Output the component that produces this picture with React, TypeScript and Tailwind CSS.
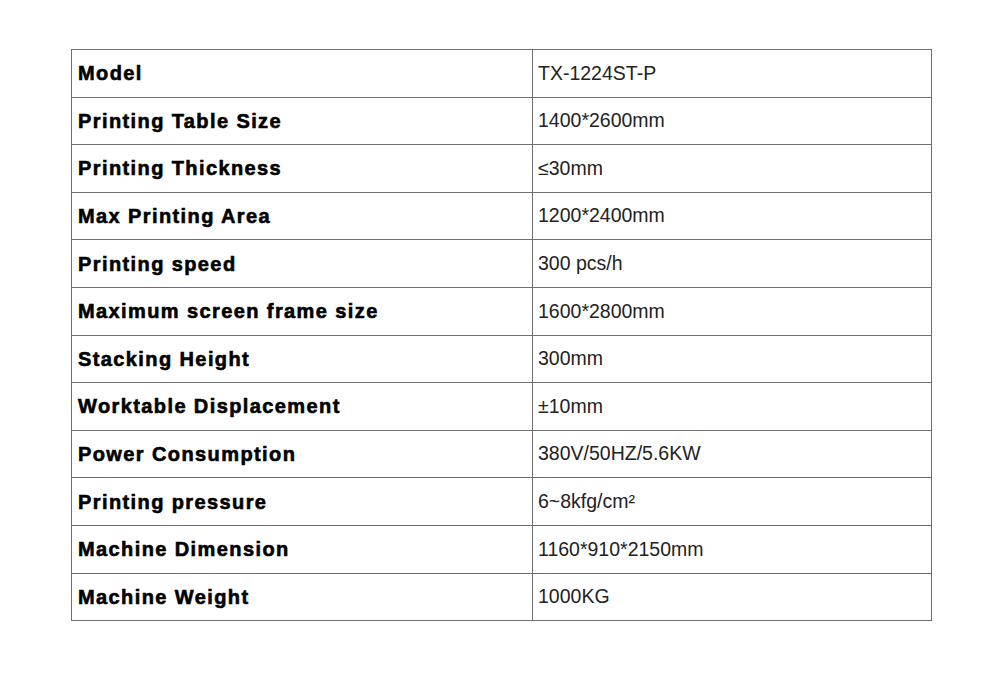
const specs: [string, string][] = [
  ['Model', 'TX-1224ST-P'],
  ['Printing Table Size', '1400*2600mm'],
  ['Printing Thickness', '≤30mm'],
  ['Max Printing Area', '1200*2400mm'],
  ['Printing speed', '300 pcs/h'],
  ['Maximum screen frame size', '1600*2800mm'],
  ['Stacking Height', '300mm'],
  ['Worktable Displacement', '±10mm'],
  ['Power Consumption', '380V/50HZ/5.6KW'],
  ['Printing pressure', '6~8kfg/cm²'],
  ['Machine Dimension', '1160*910*2150mm'],
  ['Machine Weight', '1000KG'],
];

export default function App() {
  return (
    <div className="h-[673px] w-[1000px] bg-white pl-[71px] pt-[49px] font-['Liberation_Sans',Arial,sans-serif]">
      <table className="w-[861px] border-collapse">
        <tbody>
          {specs.map(([label, value]) => (
            <tr key={label} className="h-[47.6px]">
              {/* heavier than plain bold in the source, so thicken with a stroke */}
              <td className="w-[461px] border-[1.5px] border-[#6e6e6e] pl-[6px] text-[20px] font-bold tracking-[1.4px] text-black [-webkit-text-stroke:0.6px_black]">
                {label}
              </td>
              <td className="border-[1.5px] border-[#6e6e6e] pl-[5px] text-[19.5px] text-[#222]">
                {value}
              </td>
            </tr>
          ))}
        </tbody>
      </table>
    </div>
  );
}
